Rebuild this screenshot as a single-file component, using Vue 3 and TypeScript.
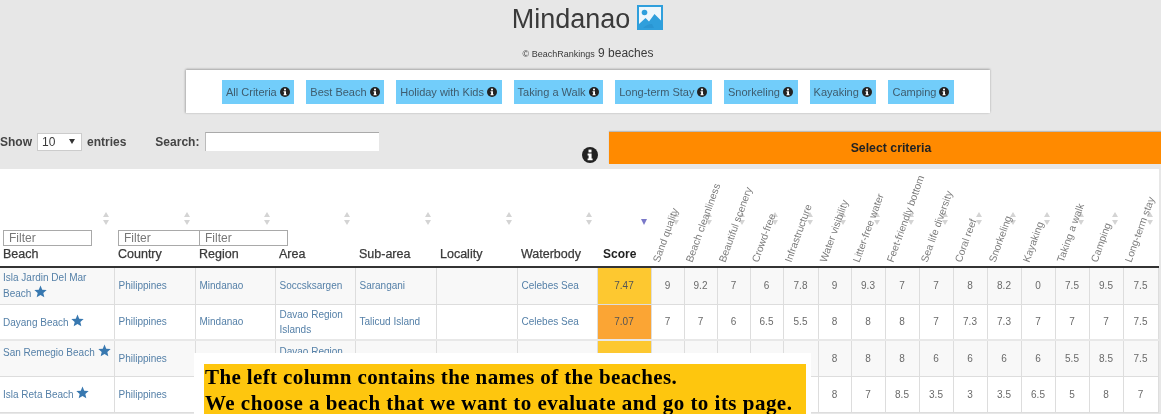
<template>
  <div class="page">
    <header class="head">
      <h1 class="title">
        Mindanao
        <svg class="pic" viewBox="0 0 26 25">
          <rect width="26" height="25" fill="#2f9fdc" />
          <rect x="2" y="2" width="22" height="21" fill="#eef7fc" />
          <circle cx="7.5" cy="7.5" r="2.8" fill="#2f9fdc" />
          <path d="M2 23 V19 L8.5 13 L12 16.5 L17.5 9 L24 15.5 V23 Z" fill="#2f9fdc" />
          <path d="M6 23 C9 20 13 18.5 15 19 L17 23 Z" fill="#2a95d2" />
        </svg>
      </h1>
      <p class="sub"><small>© BeachRankings</small> 9 beaches</p>
    </header>

    <nav class="criteria">
      <a v-for="c in criteria" :key="c" class="crit-btn">
        {{ c }}
        <svg class="info" viewBox="0 0 16 16">
          <circle cx="8" cy="8" r="8" fill="#222" />
          <rect x="6.5" y="2.6" width="3" height="2.8" fill="#fff" />
          <path d="M5.6 6.6 H9.6 V11.4 H10.6 V13.2 H5.6 V11.4 H6.6 V8.4 H5.6 Z" fill="#fff" />
        </svg>
      </a>
    </nav>

    <div class="controls">
      <div class="left-controls">
        <label class="lbl">Show</label>
        <span class="select">10 <i class="caret"></i></span>
        <label class="lbl entries">entries</label>
        <label class="lbl search">Search:</label>
        <input class="search-input" type="text" />
      </div>
      <svg class="info big" viewBox="0 0 16 16">
        <circle cx="8" cy="8" r="8" fill="#222" />
        <rect x="6.5" y="2.6" width="3" height="2.8" fill="#fff" />
        <path d="M5.6 6.6 H9.6 V11.4 H10.6 V13.2 H5.6 V11.4 H6.6 V8.4 H5.6 Z" fill="#fff" />
      </svg>
      <div class="select-criteria">Select criteria</div>
    </div>

    <table class="rank">
      <colgroup>
        <col v-for="(w, i) in widths" :key="i" :style="{ width: w + 'px' }" />
      </colgroup>
      <thead>
        <tr>
          <th v-for="h in textCols" :key="h.name" :class="{ score: h.name === 'Score' }">
            <i v-if="h.name === 'Score'" class="sort-active"></i>
            <i v-else class="sort"></i>
            <input v-if="h.filter" class="filter" :class="h.filter" placeholder="Filter" />
            <span class="name">{{ h.name }}</span>
          </th>
          <th v-for="c in rotated" :key="c" class="rot-th">
            <i class="sort"></i>
            <span class="rot">{{ c }}</span>
          </th>
        </tr>
      </thead>
      <tbody>
        <tr v-for="(r, i) in rows" :key="i" :class="{ odd: i % 2 === 0, thick: i === 2 }">
          <td class="link beach">
            <span :class="{ lift: i === 2 }">{{ r.beach }} <svg class="star" viewBox="0 0 24 24"><path d="M12 1 L15.2 8.6 L23.4 9.3 L17.2 14.7 L19 22.8 L12 18.5 L5 22.8 L6.8 14.7 L.6 9.3 L8.8 8.6 Z" /></svg></span>
          </td>
          <td class="link">{{ r.country }}</td>
          <td class="link">{{ r.region }}</td>
          <td class="link" :class="{ top: i === 2 }">{{ r.area }}</td>
          <td class="link">{{ r.sub }}</td>
          <td></td>
          <td class="link">{{ r.water }}</td>
          <td class="num sc" :style="{ background: r.color }">{{ r.score }}</td>
          <td v-for="(v, j) in r.vals" :key="j" class="num">{{ v }}</td>
        </tr>
      </tbody>
    </table>

    <div class="note">
      <div class="note-inner">
        <span class="line-one">The left column contains the names of the beaches.</span><br />
        We choose a beach that we want to evaluate and go to its page.
      </div>
    </div>
  </div>
</template>

<script setup lang="ts">
interface Row {
  beach: string
  country: string
  region: string
  area: string
  sub: string
  water: string
  score: string
  color: string
  vals: (number | string)[]
}

const criteria = [
  'All Criteria',
  'Best Beach',
  'Holiday with Kids',
  'Taking a Walk',
  'Long-term Stay',
  'Snorkeling',
  'Kayaking',
  'Camping'
]

const widths = [114, 81, 80, 80, 81, 81, 80, 54, 33, 33, 33, 33, 35, 33, 34, 34, 34, 34, 34, 34, 34, 34, 35]

const textCols = [
  { name: 'Beach', filter: 'f-beach' },
  { name: 'Country', filter: 'f-country' },
  { name: 'Region', filter: 'f-region' },
  { name: 'Area' },
  { name: 'Sub-area' },
  { name: 'Locality' },
  { name: 'Waterbody' },
  { name: 'Score' }
]

const rotated = [
  'Sand quality',
  'Beach cleanliness',
  'Beautiful scenery',
  'Crowd-free',
  'Infrastructure',
  'Water visibility',
  'Litter-free water',
  'Feet-friendly bottom',
  'Sea life diversity',
  'Coral reef',
  'Snorkeling',
  'Kayaking',
  'Taking a walk',
  'Camping',
  'Long-term stay'
]

const rows: Row[] = [
  {
    beach: 'Isla Jardin Del Mar Beach',
    country: 'Philippines',
    region: 'Mindanao',
    area: 'Soccsksargen',
    sub: 'Sarangani',
    water: 'Celebes Sea',
    score: '7.47',
    color: '#fdc830',
    vals: [9, 9.2, 7, 6, 7.8, 9, 9.3, 7, 7, 8, 8.2, 0, 7.5, 9.5, 7.5]
  },
  {
    beach: 'Dayang Beach',
    country: 'Philippines',
    region: 'Mindanao',
    area: 'Davao Region Islands',
    sub: 'Talicud Island',
    water: 'Celebes Sea',
    score: '7.07',
    color: '#fba534',
    vals: [7, 7, 6, 6.5, 5.5, 8, 8, 8, 7, 7.3, 7.3, 7, 7, 7, 7.5]
  },
  {
    beach: 'San Remegio Beach',
    country: 'Philippines',
    region: '',
    area: 'Davao Region',
    sub: '',
    water: '',
    score: '',
    color: '#fdc830',
    vals: ['', '', '', '', '', 8, 8, 8, 6, 6, 6, 6, 5.5, 8.5, 7.5]
  },
  {
    beach: 'Isla Reta Beach',
    country: 'Philippines',
    region: '',
    area: '',
    sub: '',
    water: '',
    score: '',
    color: '#fdc830',
    vals: ['', '', '', '', '', 8, 7, 8.5, 3.5, 3, 3.5, 6.5, 5, 8, 7]
  }
]
</script>

<style scoped>
.page {
  position: relative;
  width: 1161px;
  height: 414px;
  overflow: hidden;
  background: #e7e7e7;
  font-family: "Liberation Sans", Arial, sans-serif;
  color: #3a3a3a;
  filter: blur(0.35px);
}

.head {
  height: 70px;
  text-align: center;
  box-sizing: border-box;
  padding-top: 4px;
}

.title {
  display: flex;
  justify-content: center;
  align-items: flex-start;
  gap: 7px;
  margin: 0;
  padding-left: 14px;
  font-size: 27px;
  font-weight: 400;
  line-height: 31px;
}

.pic {
  width: 26px;
  height: 25px;
  margin-top: 1px;
}

.sub {
  margin: 10px 0 0;
  padding-left: 15px;
  font-size: 12px;
  line-height: 16px;
}

.sub small {
  font-size: 9px;
}

.criteria {
  display: flex;
  align-items: center;
  gap: 12px;
  box-sizing: border-box;
  width: 804px;
  height: 43px;
  margin-left: 186px;
  padding-left: 36px;
  background: #fff;
  box-shadow: 0 -1px 2px #aaa, -1px 0 2px #bbb;
}

.crit-btn {
  display: flex;
  align-items: center;
  gap: 3px;
  height: 24px;
  padding: 0 4.6px 0 4px;
  background: #72cdfa;
  color: #3e5c6e;
  font-size: 11px;
  white-space: nowrap;
}

.info {
  width: 10px;
  height: 10px;
}

.info.big {
  width: 16px;
  height: 16px;
  margin: 15px 11px 0 0;
  flex: none;
}

.controls {
  display: flex;
  align-items: flex-start;
  height: 56px;
  padding-top: 19px;
  box-sizing: border-box;
}

.left-controls {
  display: flex;
  align-items: center;
  width: 582px;
  height: 19px;
}

.lbl {
  font-size: 12px;
  font-weight: 700;
  color: #444;
}

.select {
  display: flex;
  align-items: center;
  justify-content: space-between;
  box-sizing: border-box;
  width: 45px;
  height: 18px;
  margin-left: 5px;
  padding: 0 6px 0 4px;
  background: #fff;
  border: 1px solid #ccc;
  font-size: 12px;
}

.caret {
  border-left: 3px solid transparent;
  border-right: 3px solid transparent;
  border-top: 5px solid #333;
}

.entries {
  margin-left: 5px;
}

.search {
  margin-left: 29px;
}

.search-input {
  box-sizing: border-box;
  width: 174px;
  height: 19px;
  margin-left: 6px;
  padding: 0;
  background: #fff;
  border: none;
  border-top: 1px solid #aaa;
  border-left: 1px solid #bbb;
}

.select-criteria {
  flex: 1;
  box-sizing: border-box;
  height: 32px;
  padding-left: 12px;
  background: #ff8a00;
  color: #222;
  font-size: 12.3px;
  font-weight: 700;
  line-height: 32px;
  text-align: center;
  box-shadow: 0 -1px 1px #bbb;
}

.rank {
  width: 1158px;
  table-layout: fixed;
  border-collapse: collapse;
  background: #fff;
  font-size: 10px;
}

.rank th {
  position: relative;
  height: 98px;
  padding: 0 4px 4px;
  box-sizing: border-box;
  border-bottom: 2px solid #333;
  text-align: left;
  vertical-align: bottom;
  font-weight: 400;
  overflow: visible;
}

.rank th:first-child {
  padding-left: 3px;
}

.rank th.score {
  padding-left: 6px;
}

.name {
  display: block;
  font-size: 12.5px;
  line-height: 16px;
  color: #3a3a3a;
  -webkit-text-stroke: 0.25px #3a3a3a;
}

.score .name {
  font-weight: 700;
  font-size: 12px;
  -webkit-text-stroke: 0;
  color: #222;
}

.sort {
  position: absolute;
  top: 43px;
  right: 5px;
  width: 0;
  height: 12px;
  border-left: 3.5px solid transparent;
  border-right: 3.5px solid transparent;
  border-top: 5px solid transparent;
  border-bottom: 5px solid transparent;
}

.sort::before,
.sort::after {
  content: "";
  position: absolute;
  left: -3.5px;
  border-left: 3.5px solid transparent;
  border-right: 3.5px solid transparent;
}

.sort::before {
  top: -5px;
  border-bottom: 5px solid #d4d4d4;
}

.sort::after {
  top: 3px;
  border-top: 5px solid #d4d4d4;
}

.sort-active {
  position: absolute;
  top: 50px;
  right: 4px;
  border-left: 3.5px solid transparent;
  border-right: 3.5px solid transparent;
  border-top: 6px solid #7a78c8;
}

.filter {
  display: block;
  box-sizing: border-box;
  width: 89px;
  height: 16px;
  padding: 0 5px;
  background: #fff;
  border: 1px solid #a9a9a9;
  border-radius: 0;
  font: 12px "Liberation Sans", Arial, sans-serif;
}

.filter::placeholder {
  color: #777;
}

.f-country {
  width: 81px;
  border-right: none;
}

.f-region {
  width: 89px;
  position: relative;
  z-index: 1;
}

.rot-th {
  padding: 0;
}

.rot {
  position: absolute;
  left: 11px;
  bottom: 2px;
  font-size: 10.3px;
  line-height: 12px;
  color: #7c7c7c;
  white-space: nowrap;
  transform: rotate(-70deg);
  transform-origin: 0 100%;
}

.rank td {
  height: 36px;
  box-sizing: border-box;
  padding: 2px 4px;
  border: 1px solid #ddd;
  border-top: none;
  line-height: 15px;
  vertical-align: middle;
}

.rank tr:first-child td {
  height: 37px;
}

.rank td:first-child {
  border-left: none;
  padding: 2px 0 2px 3px;
}

.odd td {
  background: #f8f8f8;
}

.thick td {
  border-top: 2px solid #e8e8e8;
}

.link {
  color: #5580a8;
}

.rank td.link.top {
  vertical-align: top;
  padding-top: 3px;
}

.beach {
  line-height: 18px;
}

.lift {
  display: inline-block;
  transform: translateY(-6px);
}

.star {
  width: 13px;
  height: 13px;
  fill: #3878b0;
  vertical-align: -1px;
}

.rank td.num {
  text-align: center;
  color: #6a6a6a;
  padding: 2px 0;
}

.rank td.sc {
  color: #555;
}

.note {
  position: absolute;
  left: 194px;
  top: 353px;
  width: 617px;
  height: 61px;
  box-sizing: border-box;
  padding: 11px 5px 0 10px;
  background: #fff;
}

.note-inner {
  height: 50px;
  padding: 0 0 0 1px;
  box-sizing: border-box;
  background: #fec60e;
  color: #000;
  font-family: "Liberation Serif", "Times New Roman", serif;
  font-size: 21px;
  font-weight: 700;
  letter-spacing: 0.48px;
  line-height: 26px;
  white-space: nowrap;
}

.line-one {
  letter-spacing: 0.38px;
}
</style>
